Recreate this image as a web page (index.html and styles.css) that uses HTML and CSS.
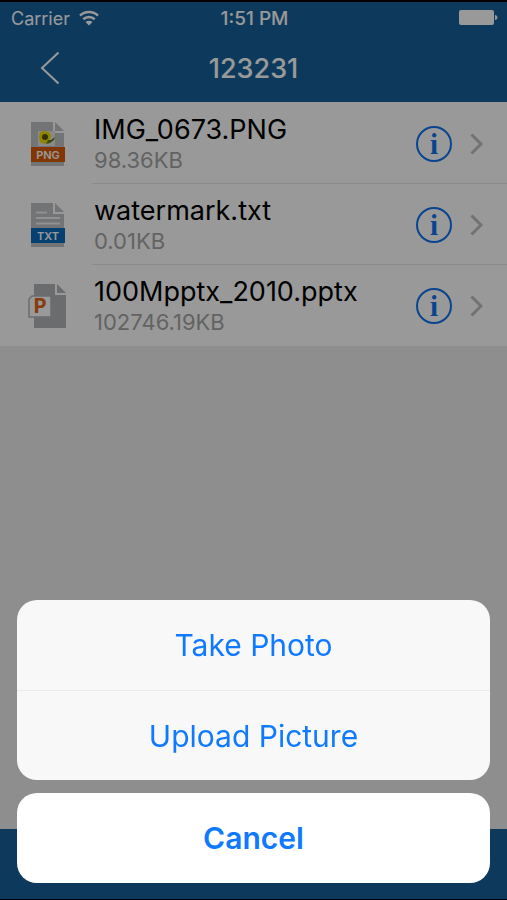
FILE: index.html
```html
<!DOCTYPE html>
<html lang="en">
<head>
    <meta charset="UTF-8">
    <meta name="viewport" content="width=device-width, initial-scale=1.0">
    <title>123231</title>
    <link rel="stylesheet" href="styles.css">
</head>
<body>
    <div class="app">
        <header class="header">
            <div class="status-bar">
                <div class="carrier">
                    <span>Carrier</span>
                    <svg width="20" height="16" viewBox="0 0 20 16" fill="none" stroke="#fff" stroke-width="2.500">
                        <path d="M1 5.600C6 .9 14 .9 19 5.600"/>
                        <path d="M4.300 9.200C7.500 6.300 12.500 6.300 15.700 9.200"/>
                        <path d="M10 15.500L6.500 12C8.600 10.200 11.400 10.200 13.500 12Z" fill="#fff" stroke="none"/>
                    </svg>
                </div>
                <span class="time">1:51 PM</span>
                <div class="battery">
                    <svg width="39" height="16" viewBox="0 0 39 16" fill="#fff">
                        <rect x="0" y="0" width="35" height="15" rx="2"/>
                        <path d="M36 5C39.300 5.500 39.300 9.500 36 10Z"/>
                    </svg>
                </div>
            </div>
            <nav class="nav-bar">
                <button class="back" aria-label="Back">
                    <svg width="20" height="34" viewBox="0 0 20 34" fill="none" stroke="#fff" stroke-width="2">
                        <path d="M18.500 1.500L2 17L18.500 32.500"/>
                    </svg>
                </button>
                <h1 class="title">123231</h1>
            </nav>
        </header>

        <ul class="file-list">
            <li class="file">
                <svg class="file-icon" width="40" height="46" viewBox="0 0 40 46">
                    <path d="M3 1H25V12H36V45H3Z" fill="#bfc2c4"/>
                    <path d="M27 1L36 10H27Z" fill="#bfc2c4"/>
                    <rect x="10" y="10" width="17" height="15" fill="#e6e6dc"/>
                    <path d="M12 11L16 10L21 11L23 15L21 21L16 23L12 21L11 16Z" fill="#f0dc00"/>
                    <circle cx="17" cy="16" r="3" fill="#5b5300"/>
                    <path d="M18 23L20 19L23 19L27 16L26 19L22 22Z" fill="#5f7d16"/>
                    <rect x="3" y="26" width="34" height="15" fill="#d95a08"/>
                    <text x="20" y="38" class="icon-label">PNG</text>
                </svg>
                <div class="file-row">
                    <div class="file-text">
                        <div class="file-name">IMG_0673.PNG</div>
                        <div class="file-size">98.36KB</div>
                    </div>
                    <button class="info" aria-label="File details">i</button>
                    <svg class="chevron" width="13" height="22" viewBox="0 0 13 22"><path d="M1.500 1.500L11 11L1.500 20.500"/></svg>
                </div>
            </li>
            <li class="file">
                <svg class="file-icon" width="40" height="46" viewBox="0 0 40 46">
                    <path d="M3 1H25V12H36V45H3Z" fill="#bfc2c4"/>
                    <path d="M27 1L36 10H27Z" fill="#bfc2c4"/>
                    <path d="M8 10.500H19M8 16H32M8 21.500H32" stroke="#f2f2f2" stroke-width="2"/>
                    <rect x="3" y="26" width="34" height="15" fill="#0a6cbd"/>
                    <text x="20" y="38" class="icon-label">TXT</text>
                </svg>
                <div class="file-row">
                    <div class="file-text">
                        <div class="file-name">watermark.txt</div>
                        <div class="file-size">0.01KB</div>
                    </div>
                    <button class="info" aria-label="File details">i</button>
                    <svg class="chevron" width="13" height="22" viewBox="0 0 13 22"><path d="M1.500 1.500L11 11L1.500 20.500"/></svg>
                </div>
            </li>
            <li class="file">
                <svg class="file-icon" width="40" height="46" viewBox="0 0 40 46">
                    <path d="M6 1H27V12H38V45H6Z" fill="#b1b4b7"/>
                    <path d="M29 1L38 10H29Z" fill="#b1b4b7"/>
                    <path d="M4 13H23V34H1V16Z" fill="#fff" stroke="#b1b4b7" stroke-width="1.500" stroke-linejoin="round"/>
                    <text x="12" y="30" class="icon-letter">P</text>
                </svg>
                <div class="file-row">
                    <div class="file-text">
                        <div class="file-name">100Mpptx_2010.pptx</div>
                        <div class="file-size">102746.19KB</div>
                    </div>
                    <button class="info" aria-label="File details">i</button>
                    <svg class="chevron" width="13" height="22" viewBox="0 0 13 22"><path d="M1.500 1.500L11 11L1.500 20.500"/></svg>
                </div>
            </li>
        </ul>

        <footer class="toolbar"></footer>
    </div>

    <!-- Action sheet -->
    <div class="overlay">
        <div class="sheet" role="dialog" aria-label="Add a picture">
            <div class="sheet-group">
                <button class="sheet-button">Take Photo</button>
                <button class="sheet-button">Upload Picture</button>
            </div>
            <button class="sheet-button cancel">Cancel</button>
        </div>
    </div>
</body>
</html>
```

FILE: styles.css
```css
* {
    box-sizing: border-box;
}
body {
    margin: 0;
    font-family: Inter, Roboto, sans-serif;
    background-color: #ededed;
}
button {
    border: none;
    background: none;
    padding: 0;
    font-family: inherit;
    cursor: pointer;
}
svg {
    display: block;
}
.app {
    min-height: 100vh;
    display: flex;
    flex-direction: column;
}

/* Header */
.header {
    background-color: #166299;
    color: #fff;
    border-top: 2px solid #000;
}
.status-bar {
    display: grid;
    grid-template-columns: 1fr auto 1fr;
    align-items: center;
    height: 32px;
    padding: 0 9px 0 11px;
    font-size: 18px;
}
.carrier {
    display: flex;
    align-items: center;
    gap: 9px;
}
.time {
    font-size: 19px;
    font-weight: 500;
}
.battery {
    justify-self: end;
}
.nav-bar {
    display: grid;
    grid-template-columns: 60px 1fr 60px;
    align-items: center;
    height: 68px;
}
.back {
    justify-self: end;
}
.title {
    margin: 0;
    text-align: center;
    font-size: 27px;
    font-weight: 500;
}

/* File list */
.file-list {
    list-style: none;
    margin: 0;
    padding: 1px 0 0;
    background-color: #fff;
}
.file {
    display: flex;
    align-items: center;
    padding-left: 28px;
}
.file-icon {
    flex: none;
    margin-right: 24px;
}
.file-row {
    flex: 1;
    display: flex;
    align-items: center;
    height: 81px;
    padding: 2px 24px 0 2px;
    border-bottom: 1px solid #e6e6e6;
}
.file:last-child .file-row {
    border-bottom-color: transparent;
}
.file-text {
    flex: 1;
}
.file-name {
    font-size: 27px;
    line-height: 32px;
    color: #000;
}
.file-size {
    font-size: 22px;
    line-height: 28px;
    color: #a6a6a6;
}
.info {
    width: 36px;
    height: 36px;
    margin-right: 18px;
    border: 2px solid #0f73ee;
    border-radius: 50%;
    color: #0f73ee;
    font-family: "Liberation Serif", serif;
    font-size: 29px;
    font-weight: bold;
    line-height: 30px;
}
.chevron {
    fill: none;
    stroke: #bebebe;
    stroke-width: 3;
}
.icon-label {
    fill: #fff;
    font-size: 11px;
    font-weight: 600;
    text-anchor: middle;
}
.icon-letter {
    fill: #e0641a;
    font-family: "Liberation Mono", monospace;
    font-size: 22px;
    font-weight: bold;
    text-anchor: middle;
}

/* Bottom bar */
.toolbar {
    height: 71px;
    margin-top: auto;
    background-color: #166299;
    border-bottom: 1px solid #000;
}

/* Action sheet */
.overlay {
    position: fixed;
    inset: 0;
    display: flex;
    align-items: flex-end;
    padding: 17px;
    background-color: rgba(0, 0, 0, 0.4);
}
.sheet {
    flex: 1;
    display: flex;
    flex-direction: column;
    gap: 13px;
}
.sheet-group {
    border-radius: 20px;
    overflow: hidden;
    background-color: #f8f8f8;
}
.sheet-button {
    display: block;
    width: 100%;
    height: 90px;
    font-size: 30px;
    color: #0f7aff;
}
.sheet-button + .sheet-button {
    border-top: 1px solid #ebebeb;
}
.cancel {
    border-radius: 20px;
    background-color: #fff;
    font-weight: 600;
}
```
